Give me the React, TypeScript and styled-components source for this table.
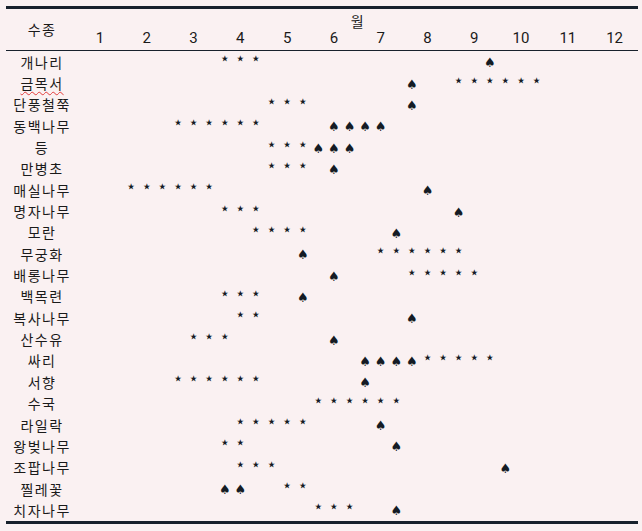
import React from "react";
import styled, { createGlobalStyle } from "styled-components";

const LINE = "#18212c";

const GlobalStyle = createGlobalStyle`
  html, body {
    margin: 0;
    padding: 0;
    background: #faf1f2;
  }
  body {
    font-family: "Noto Sans CJK KR", "Noto Sans", sans-serif;
    color: #1a1a1a;
  }
`;

const Page = styled.div`
  width: 642px;
  height: 531px;
  box-sizing: border-box;
  padding: 6px 4px 0 6px;
  background: #faf1f2;
`;

const Table = styled.div`
  width: 632px;
  border-top: 3px solid ${LINE};
  border-bottom: 3px solid ${LINE};
`;

const Header = styled.div`
  display: grid;
  grid-template-columns: 70.6px repeat(12, 1fr);
  grid-template-rows: 20px 21px;
  border-bottom: 1px solid ${LINE};
`;

const SpeciesHead = styled.div`
  grid-column: 1;
  grid-row: 1 / span 2;
  display: flex;
  align-items: center;
  justify-content: center;
  font-size: 14px;
  letter-spacing: 1.5px;
  padding-left: 1.5px;
  line-height: 1;
  padding-bottom: 2px;
`;

const MonthHead = styled.div`
  grid-column: 2 / span 12;
  grid-row: 1;
  display: flex;
  align-items: flex-end;
  justify-content: center;
  font-size: 14px;
  line-height: 1;
  padding-bottom: 1px;
`;

const MonthNum = styled.div<{ $col: number }>`
  grid-column: ${(p) => p.$col};
  grid-row: 2;
  display: flex;
  align-items: center;
  justify-content: center;
  font-family: "Liberation Sans Narrow", "Roboto", sans-serif;
  font-size: 15px;
  line-height: 1;
  padding-bottom: 2px;
`;

const Row = styled.div`
  display: grid;
  grid-template-columns: 70.6px 1fr;
  height: 21.35px;
  align-items: center;
`;

const Name = styled.div<{ $flag?: boolean }>`
  text-align: center;
  font-size: 14px;
  letter-spacing: 1.5px;
  padding-left: 1.5px;
  line-height: 1;
  white-space: nowrap;
  text-decoration: ${(p) => (p.$flag ? "underline wavy #e23b3b" : "none")};
  text-decoration-thickness: 1px;
  text-underline-offset: 2px;
`;

const Timeline = styled.div`
  display: grid;
  grid-template-columns: repeat(36, 1fr);
  height: 100%;
  align-items: center;
`;

const Mark = styled.span<{ $col: number; $kind: "star" | "spade" }>`
  grid-column: ${(p) => p.$col};
  grid-row: 1;
  justify-self: center;
  font-family: "DejaVu Sans", sans-serif;
  line-height: 1;
  color: #141b24;
  font-size: ${(p) => (p.$kind === "star" ? "17px" : "13px")};
  transform: translateY(${(p) => (p.$kind === "star" ? "-3px" : "1px")});
`;

type Range = [number, number] | null;
type Species = { name: string; stars: Range; spades: Range; flag?: boolean };

const DATA: Species[] = [
  { name: "개나리", stars: [9, 11], spades: [26, 26] },
  { name: "금목서", stars: [24, 29], spades: [21, 21], flag: true },
  { name: "단풍철쭉", stars: [12, 14], spades: [21, 21] },
  { name: "동백나무", stars: [6, 11], spades: [16, 19] },
  { name: "등", stars: [12, 14], spades: [15, 17] },
  { name: "만병초", stars: [12, 14], spades: [16, 16] },
  { name: "매실나무", stars: [3, 8], spades: [22, 22] },
  { name: "명자나무", stars: [9, 11], spades: [24, 24] },
  { name: "모란", stars: [11, 14], spades: [20, 20] },
  { name: "무궁화", stars: [19, 24], spades: [14, 14] },
  { name: "배롱나무", stars: [21, 25], spades: [16, 16] },
  { name: "백목련", stars: [9, 11], spades: [14, 14] },
  { name: "복사나무", stars: [10, 11], spades: [21, 21] },
  { name: "산수유", stars: [7, 9], spades: [16, 16] },
  { name: "싸리", stars: [22, 26], spades: [18, 21] },
  { name: "서향", stars: [6, 11], spades: [18, 18] },
  { name: "수국", stars: [15, 20], spades: null },
  { name: "라일락", stars: [10, 14], spades: [19, 19] },
  { name: "왕벚나무", stars: [9, 10], spades: [20, 20] },
  { name: "조팝나무", stars: [10, 12], spades: [27, 27] },
  { name: "찔레꽃", stars: [13, 14], spades: [9, 10] },
  { name: "치자나무", stars: [15, 17], spades: [20, 20] },
];

const range = (r: Range): number[] => {
  if (!r) return [];
  const out: number[] = [];
  for (let i = r[0]; i <= r[1]; i++) out.push(i);
  return out;
};

const MONTHS = Array.from({ length: 12 }, (_, i) => i + 1);

export default function App() {
  return (
    <>
      <GlobalStyle />
      <Page>
        <Table>
          <Header>
            <SpeciesHead>수종</SpeciesHead>
            <MonthHead>월</MonthHead>
            {MONTHS.map((m) => (
              <MonthNum key={m} $col={m + 1}>
                {m}
              </MonthNum>
            ))}
          </Header>
          {DATA.map((s) => (
            <Row key={s.name}>
              <Name $flag={s.flag}>{s.name}</Name>
              <Timeline>
                {range(s.stars).map((i) => (
                  <Mark key={`s${i}`} $col={i + 1} $kind="star">
                    ⋆
                  </Mark>
                ))}
                {range(s.spades).map((i) => (
                  <Mark key={`p${i}`} $col={i + 1} $kind="spade">
                    ♠
                  </Mark>
                ))}
              </Timeline>
            </Row>
          ))}
        </Table>
      </Page>
    </>
  );
}
